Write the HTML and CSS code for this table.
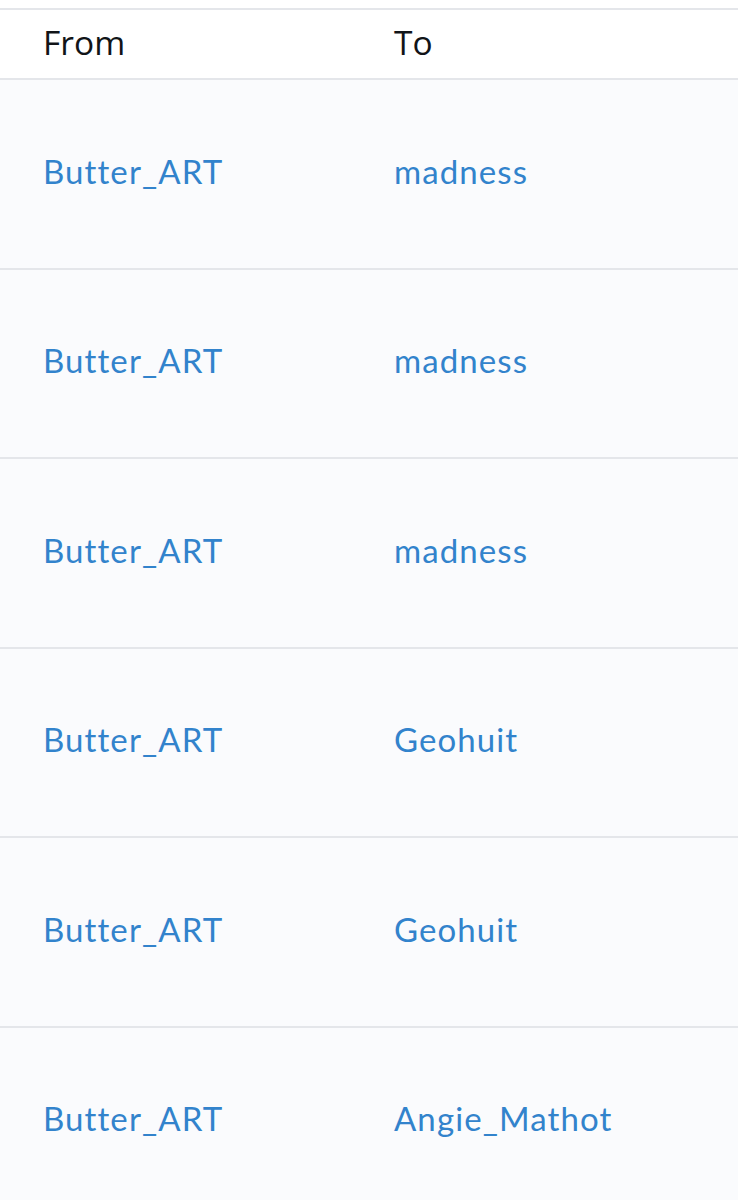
FILE: index.html
```html
<!DOCTYPE html>
<html>
<head>
<meta charset="utf-8">
<link rel="stylesheet" href="styles.css">
</head>
<body>
<div class="table">
  <div class="row head">
    <div class="cell">From</div>
    <div class="cell">To</div>
  </div>
  <div class="row">
    <div class="cell link">Butter_ART</div>
    <div class="cell link">madness</div>
  </div>
  <div class="row">
    <div class="cell link">Butter_ART</div>
    <div class="cell link">madness</div>
  </div>
  <div class="row">
    <div class="cell link">Butter_ART</div>
    <div class="cell link">madness</div>
  </div>
  <div class="row">
    <div class="cell link">Butter_ART</div>
    <div class="cell link">Geohuit</div>
  </div>
  <div class="row">
    <div class="cell link">Butter_ART</div>
    <div class="cell link">Geohuit</div>
  </div>
  <div class="row">
    <div class="cell link">Butter_ART</div>
    <div class="cell link">Angie_Mathot</div>
  </div>
</div>
</body>
</html>
```
FILE: styles.css
```css
html, body {
  margin: 0;
  padding: 0;
  background: #ffffff;
}
body {
  padding-top: 8px;
  overflow: hidden;
  height: 1200px;
}
.table {
  border-top: 2px solid #e4e6ea;
}
.row {
  display: grid;
  grid-template-columns: 351px 1fr;
  align-items: center;
  height: 187.5px;
  border-bottom: 2px solid #e4e6ea;
  background: #fafbfd;
  padding-left: 43px;
}
.row.head {
  height: 68px;
  background: #ffffff;
}
.head .cell {
  font-family: "Open Sans", "Noto Sans", sans-serif;
  font-size: 33.5px;
  color: #111418;
  padding-bottom: 4px;
}
.cell.link {
  font-family: "Lato", "Noto Sans", sans-serif;
  font-size: 33px;
  color: #3283cc;
  letter-spacing: 1.1px;
  padding-bottom: 6px;
}
```
